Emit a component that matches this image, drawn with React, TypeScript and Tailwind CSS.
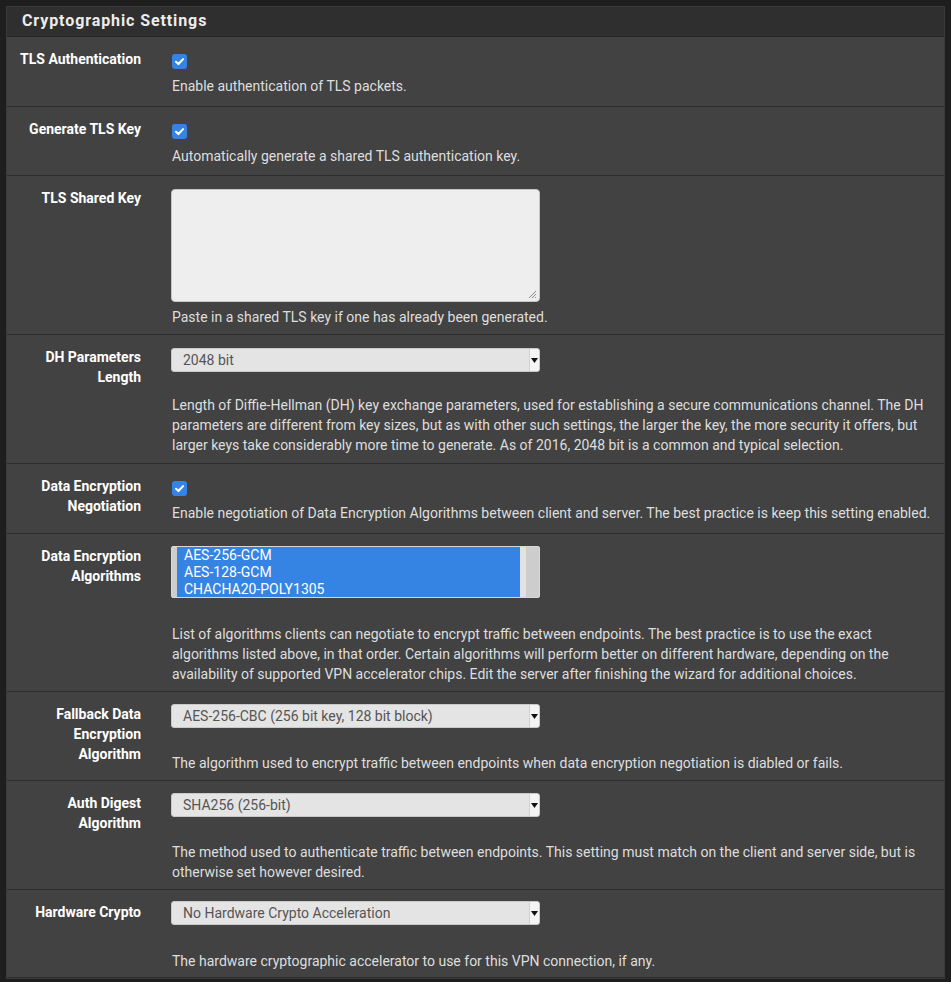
import type { ReactNode } from "react";

const font = { fontFamily: "Roboto, 'Liberation Sans', sans-serif" };

function Checkbox() {
  return (
    <div className="ml-[1px] mt-[3px] flex h-[15px] w-[15px] items-center justify-center rounded-[3px] bg-[#3584e4]">
      <svg width="11" height="11" viewBox="0 0 12 12">
        <path d="M2.2 6.3 4.8 8.8 9.9 3.4" fill="none" stroke="#fff" strokeWidth="2.2" strokeLinecap="round" strokeLinejoin="round" />
      </svg>
    </div>
  );
}

function FakeSelect({ value }: { value: string }) {
  return (
    <div className="flex h-[24px] w-[369px] items-stretch overflow-hidden rounded-[3px] border border-[#c9c9c9] bg-[#e4e4e4]">
      <div className="flex-1 pl-[11px] text-[14px] leading-[22px] text-[#555555]">{value}</div>
      <div className="flex w-[10px] items-center justify-center border-l border-[#d2d2d2] bg-[#f4f4f4]">
        <svg width="7" height="5" viewBox="0 0 7 5">
          <path d="M0 0h7L3.5 5z" fill="#111" />
        </svg>
      </div>
    </div>
  );
}

function Help({ children, gap }: { children: ReactNode; gap: string }) {
  return <p className={`${gap} pl-[1px] text-[14px] leading-[20px] text-[#dedede]`}>{children}</p>;
}

// pad = top/bottom padding classes of the control column, tuned per row
function Row({ label, children, pad }: { label: string; children: ReactNode; pad: string }) {
  return (
    <div className="flex border-b border-[#2d2d2d] bg-[#424242]">
      <div className="w-[150px] shrink-0 pl-[10px] pr-[16px] pt-[12px] text-right text-[14px] font-bold leading-[20px] text-white">
        {label}
      </div>
      <div className={`min-w-0 flex-1 pl-[14px] pr-[10px] ${pad}`}>{children}</div>
    </div>
  );
}

export default function App() {
  return (
    <div className="min-h-[982px] bg-[#1e1e1e] px-[6px] pt-[6px]" style={font}>
      <div className="border border-[#3a3a3a] bg-[#424242]">
        <div className="h-[30px] border-b border-[#262626] bg-[#2f2f2f] pl-[15px] pt-[4px] text-[16px] font-bold leading-[20px] tracking-[0.9px] text-[#ececec]">
          Cryptographic Settings
        </div>

        <Row label="TLS Authentication" pad="pt-[14px] pb-[10px]">
          <Checkbox />
          <Help gap="mt-[7px]">Enable authentication of TLS packets.</Help>
        </Row>

        <Row label="Generate TLS Key" pad="pt-[14px] pb-[9px]">
          <Checkbox />
          <Help gap="mt-[7px]">Automatically generate a shared TLS authentication key.</Help>
        </Row>

        <Row label="TLS Shared Key" pad="pt-[13px] pb-[7px]">
          <div className="relative h-[113px] w-[369px] rounded-[4px] border border-[#c6c6c6] bg-[#eeeeee]">
            <svg className="absolute bottom-[2px] right-[2px]" width="9" height="9" viewBox="0 0 9 9">
              <path d="M8 1 1 8M8 4 4 8M8 7 7 8" stroke="#8a8a8a" strokeWidth="1" />
            </svg>
          </div>
          <Help gap="mt-[5px]">Paste in a shared TLS key if one has already been generated.</Help>
        </Row>

        <Row label="DH Parameters Length" pad="pt-[13px] pb-[8px]">
          <FakeSelect value="2048 bit" />
          <Help gap="mt-[23px]">
            Length of Diffie-Hellman (DH) key exchange parameters, used for establishing a secure communications channel. The DH
            parameters are different from key sizes, but as with other such settings, the larger the key, the more security it offers, but
            larger keys take considerably more time to generate. As of 2016, 2048 bit is a common and typical selection.
          </Help>
        </Row>

        <Row label="Data Encryption Negotiation" pad="pt-[14px] pb-[10px]">
          <Checkbox />
          <Help gap="mt-[7px]">
            Enable negotiation of Data Encryption Algorithms between client and server. The best practice is keep this setting enabled.
          </Help>
        </Row>

        <Row label="Data Encryption Algorithms" pad="pt-[12px] pb-[7px]">
          <div className="flex h-[52px] w-[369px] rounded-[2px] border border-[#d8d8d8] bg-[#cdcdcd] pl-[5px]">
            <div className="w-[343px] bg-[#3584e4] pl-[7px] text-[14px] leading-[17px] text-white">
              <div>AES-256-GCM</div>
              <div>AES-128-GCM</div>
              <div>CHACHA20-POLY1305</div>
            </div>
            <div className="w-[6px] bg-[#e2e2e2]" />
          </div>
          <Help gap="mt-[26px]">
            List of algorithms clients can negotiate to encrypt traffic between endpoints. The best practice is to use the exact
            algorithms listed above, in that order. Certain algorithms will perform better on different hardware, depending on the
            availability of supported VPN accelerator chips. Edit the server after finishing the wizard for additional choices.
          </Help>
        </Row>

        <Row label="Fallback Data Encryption Algorithm" pad="pt-[12px] pb-[7px]">
          <FakeSelect value="AES-256-CBC (256 bit key, 128 bit block)" />
          <Help gap="mt-[25px]">
            The algorithm used to encrypt traffic between endpoints when data encryption negotiation is diabled or fails.
          </Help>
        </Row>

        <Row label="Auth Digest Algorithm" pad="pt-[12px] pb-[7px]">
          <FakeSelect value="SHA256 (256-bit)" />
          <Help gap="mt-[25px]">
            The method used to authenticate traffic between endpoints. This setting must match on the client and server side, but is
            otherwise set however desired.
          </Help>
        </Row>

        <Row label="Hardware Crypto" pad="pt-[11px] pb-[6px]">
          <FakeSelect value="No Hardware Crypto Acceleration" />
          <Help gap="mt-[26px]">The hardware cryptographic accelerator to use for this VPN connection, if any.</Help>
        </Row>
      </div>
    </div>
  );
}
